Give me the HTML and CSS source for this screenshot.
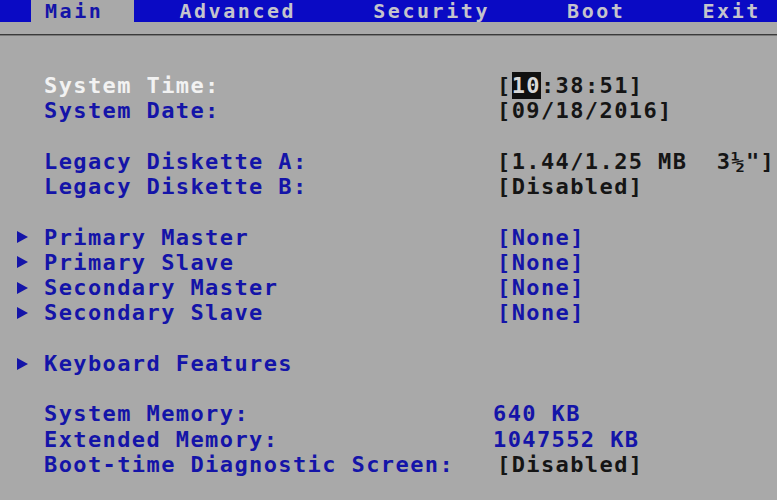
FILE: index.html
```html
<!DOCTYPE html>
<html lang="en">

<head>
  <meta charset="UTF-8" />
  <meta name="viewport" content="width=device-width, initial-scale=1.0" />
  <title>BIOS Setup Utility</title>
  <link rel="stylesheet" href="styles.css">
</head>

<body>
  <!-- top menu bar -->
  <div class="menubar">
    <span class="tab">Main</span>
    <span class="item">Advanced</span>
    <span class="item">Security</span>
    <span class="item">Boot</span>
    <span class="item">Exit</span>
  </div>
  <div class="rule"></div>

  <!-- settings list -->
  <div class="panel">
    <div class="row current"><span></span><span>System Time:</span><span class="val">[<b class="cursor">10</b>:38:51]</span></div>
    <div class="row"><span></span><span>System Date:</span><span class="val">[09/18/2016]</span></div>
    <div class="blank"></div>
    <div class="row"><span></span><span>Legacy Diskette A:</span><span class="val">[1.44/1.25 MB  3½"]</span></div>
    <div class="row"><span></span><span>Legacy Diskette B:</span><span class="val">[Disabled]</span></div>
    <div class="blank"></div>
    <div class="row"><i class="arrow"></i><span>Primary Master</span><span class="val blue">[None]</span></div>
    <div class="row"><i class="arrow"></i><span>Primary Slave</span><span class="val blue">[None]</span></div>
    <div class="row"><i class="arrow"></i><span>Secondary Master</span><span class="val blue">[None]</span></div>
    <div class="row"><i class="arrow"></i><span>Secondary Slave</span><span class="val blue">[None]</span></div>
    <div class="blank"></div>
    <div class="row"><i class="arrow"></i><span>Keyboard Features</span><span></span></div>
    <div class="blank"></div>
    <div class="row"><span></span><span>System Memory:</span><span class="val blue mem">640 KB</span></div>
    <div class="row"><span></span><span>Extended Memory:</span><span class="val blue mem">1047552 KB</span></div>
    <div class="row"><span></span><span>Boot-time Diagnostic Screen:</span><span class="val">[Disabled]</span></div>
  </div>
</body>

</html>
```

FILE: styles.css
```css
/* whole screen */
body {
  margin: 0;
  width: 777px;
  height: 500px;
  overflow: hidden;
  background: #a9a9a9;
  font-family: "DejaVu Sans Mono", "Liberation Mono", monospace;
  font-weight: bold;
  font-size: 22px;
  letter-spacing: 1.4px;
  color: #1414a8;
}

/* blue menu strip */
.menubar {
  display: flex;
  gap: 45px;
  height: 22px;
  line-height: 22px;
  padding-left: 31px;
  background: #0a0ac4;
  color: #c4c4cc;
  font-size: 20px;
  letter-spacing: 2.56px;
  white-space: pre;
}

/* selected menu */
.tab {
  padding: 0 31px 0 14px;
  background: #a9a9a9;
  color: #1414a8;
}

.item {
  padding-right: 32px;
}

/* separator under the menu */
.rule {
  margin-top: 12px;
  height: 1px;
  background: #3a3a3a;
  border-bottom: 1px solid #7a7a7a;
}

.panel {
  padding-top: 37px;
}

.row {
  display: grid;
  grid-template-columns: 44px 453px 1fr;
  align-items: center;
  height: 25.27px;
  line-height: 25.27px;
  white-space: pre;
}

.blank {
  height: 25.27px;
}

/* highlighted item */
.current {
  color: #f2f2f2;
}

.val {
  color: #151515;
}

.val.blue {
  color: #1414a8;
}

.mem {
  margin-left: -4px;
}

/* cursor on the hour field */
.cursor {
  background: #101010;
  color: #d8d8d8;
  padding: 1px 0;
}

/* submenu triangle */
.arrow {
  margin-left: 17px;
  width: 0;
  height: 0;
  border-left: 11px solid #1414a8;
  border-top: 6px solid transparent;
  border-bottom: 6px solid transparent;
}
```
